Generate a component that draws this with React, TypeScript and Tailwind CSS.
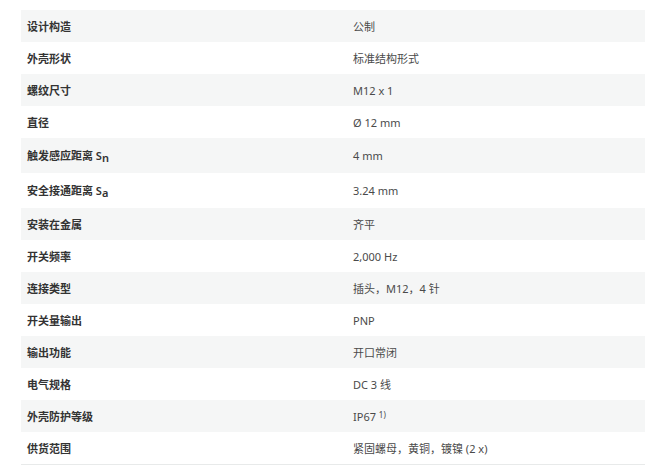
import React from "react";

type Row = { k: React.ReactNode; v: React.ReactNode; tall?: boolean };

const rows: Row[] = [
  { k: "设计构造", v: "公制" },
  { k: "外壳形状", v: "标准结构形式" },
  { k: "螺纹尺寸", v: "M12 x 1" },
  { k: "直径", v: "Ø 12 mm" },
  {
    k: (
      <>
        触发感应距离 S<sub className="text-[11px] relative top-[2px] align-baseline">n</sub>
      </>
    ),
    v: "4 mm",
    tall: true,
  },
  {
    k: (
      <>
        安全接通距离 S<sub className="text-[11px] relative top-[2px] align-baseline">a</sub>
      </>
    ),
    v: "3.24 mm",
    tall: true,
  },
  { k: "安装在金属", v: "齐平" },
  { k: "开关频率", v: "2,000 Hz" },
  { k: "连接类型", v: "插头，M12，4 针" },
  { k: "开关量输出", v: "PNP" },
  { k: "输出功能", v: "开口常闭" },
  { k: "电气规格", v: "DC 3 线" },
  {
    k: "外壳防护等级",
    v: (
      <>
        IP67 <sup className="text-[8px] relative -top-[3px]">1)</sup>
      </>
    ),
  },
  { k: "供货范围", v: "紧固螺母，黄铜，镀镍 (2 x)" },
];

export default function App() {
  return (
    <div
      className="w-[646px] h-[472px] bg-white pt-[10px] pl-[21px] pr-[1px]"
      style={{ fontFamily: '"Noto Sans", "Noto Sans CJK SC", sans-serif' }}
    >
      <div className="border-b border-[#e8eaea]">
        {rows.map((r, i) => (
          <div
            key={i}
            className={`grid grid-cols-[326px_1fr] items-center text-[11px] ${
              r.tall ? "h-[35px]" : "h-[32px]"
            } ${i % 2 === 0 ? "bg-[#f5f6f6]" : "bg-white"}`}
          >
            <div className="pl-[6px] font-semibold text-[#333333] leading-none">{r.k}</div>
            <div className="pl-[6px] text-[#4a4a4a] leading-none">{r.v}</div>
          </div>
        ))}
      </div>
    </div>
  );
}
